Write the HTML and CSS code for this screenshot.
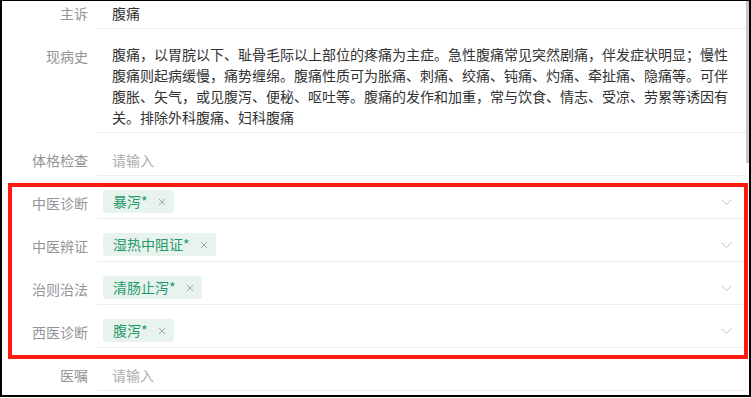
FILE: index.html
```html
<!DOCTYPE html>
<html lang="zh-CN">

<head>
  <meta charset="UTF-8">
  <meta name="viewport" content="width=device-width, initial-scale=1.0">
  <title>病历</title>
  <link rel="stylesheet" href="styles.css">
</head>

<body>
  <div class="frame">
    <!-- Form rows (scrolled a little) -->
    <div class="record">
      <div class="row">
        <div class="label">主诉</div>
        <div class="field text">腹痛</div>
      </div>

      <div class="row">
        <div class="label">现病史</div>
        <div class="field area">腹痛，以胃脘以下、耻骨毛际以上部位的疼痛为主症。急性腹痛常见突然剧痛，伴发症状明显；慢性腹痛则起病缓慢，痛势缠绵。腹痛性质可为胀痛、刺痛、绞痛、钝痛、灼痛、牵扯痛、隐痛等。可伴腹胀、矢气，或见腹泻、便秘、呕吐等。腹痛的发作和加重，常与饮食、情志、受凉、劳累等诱因有关。排除外科腹痛、妇科腹痛</div>
      </div>

      <div class="row">
        <div class="label">体格检查</div>
        <div class="field text placeholder">请输入</div>
      </div>

      <div class="row">
        <div class="label">中医诊断</div>
        <div class="field select">
          <span class="tag">暴泻*<svg class="tag-close" viewBox="0 0 8 8"><path d="M1 1L7 7M7 1L1 7" /></svg></span>
          <svg class="arrow" viewBox="0 0 11 6"><path d="M0.5 0.5L5.5 5.5L10.5 0.5" /></svg>
        </div>
      </div>

      <div class="row">
        <div class="label">中医辨证</div>
        <div class="field select">
          <span class="tag">湿热中阻证*<svg class="tag-close" viewBox="0 0 8 8"><path d="M1 1L7 7M7 1L1 7" /></svg></span>
          <svg class="arrow" viewBox="0 0 11 6"><path d="M0.5 0.5L5.5 5.5L10.5 0.5" /></svg>
        </div>
      </div>

      <div class="row">
        <div class="label">治则治法</div>
        <div class="field select">
          <span class="tag">清肠止泻*<svg class="tag-close" viewBox="0 0 8 8"><path d="M1 1L7 7M7 1L1 7" /></svg></span>
          <svg class="arrow" viewBox="0 0 11 6"><path d="M0.5 0.5L5.5 5.5L10.5 0.5" /></svg>
        </div>
      </div>

      <div class="row">
        <div class="label">西医诊断</div>
        <div class="field select">
          <span class="tag">腹泻*<svg class="tag-close" viewBox="0 0 8 8"><path d="M1 1L7 7M7 1L1 7" /></svg></span>
          <svg class="arrow" viewBox="0 0 11 6"><path d="M0.5 0.5L5.5 5.5L10.5 0.5" /></svg>
        </div>
      </div>

      <div class="row">
        <div class="label">医嘱</div>
        <div class="field text placeholder">请输入</div>
      </div>
    </div>

    <!-- scrollbar thumb and the red highlight box sit on top -->
    <div class="scroll-thumb"></div>
    <div class="highlight"></div>
  </div>
</body>

</html>
```

FILE: styles.css
```css
/* Global */
* {
  box-sizing: border-box;
}

body {
  margin: 0;
  font-family: "Noto Sans CJK SC", "Noto Sans", sans-serif;
  font-size: 14px;
  color: #323233;
  background-color: #ffffff;
}

/* Outer frame */
.frame {
  position: relative;
  width: 751px;
  height: 397px;
  border-top: 1px solid #000;
  border-left: 2px solid #000;
  border-right: 2px solid #000;
  border-bottom: 2px solid #000;
  overflow: hidden;
}

.record {
  margin-top: -15px;
  padding-right: 3px;
}

/* Rows */
.row {
  display: flex;
  align-items: flex-start;
}

.label {
  width: 95px;
  flex-shrink: 0;
  padding: 17px 9px 0 0;
  line-height: 20px;
  text-align: right;
  color: #939599;
}

.field {
  flex: 1;
  min-width: 0;
  border-bottom: 1px solid #ebedf0;
}

.field.text {
  padding: 17px 16px 5px 15px;
  line-height: 20px;
}

.field.area {
  padding: 15px 16px 4px 15px;
  line-height: 21px;
}

.placeholder {
  color: #abadb1;
}

/* Select rows with tags */
.field.select {
  display: flex;
  align-items: center;
  justify-content: space-between;
  padding: 14px 14px 5px 6px;
}

.tag {
  display: inline-flex;
  align-items: center;
  gap: 10px;
  height: 23px;
  padding: 0 8px 0 10px;
  border-radius: 3px;
  background-color: #e8f3ee;
  color: #1f9a6b;
  line-height: 23px;
}

.tag-close {
  width: 8px;
  height: 8px;
  fill: none;
  stroke: #a3a6ab;
  stroke-width: 1;
}

.arrow {
  width: 11px;
  height: 6px;
  fill: none;
  stroke: #c3c5c9;
  stroke-width: 1;
}

/* Overlays */
.scroll-thumb {
  position: absolute;
  top: 0;
  right: 0;
  width: 3px;
  height: 162px;
  background-color: #c8c8c8;
}

.highlight {
  position: absolute;
  left: 6px;
  top: 182px;
  width: 740px;
  height: 176px;
  border: 4px solid #ff1a12;
}
```
